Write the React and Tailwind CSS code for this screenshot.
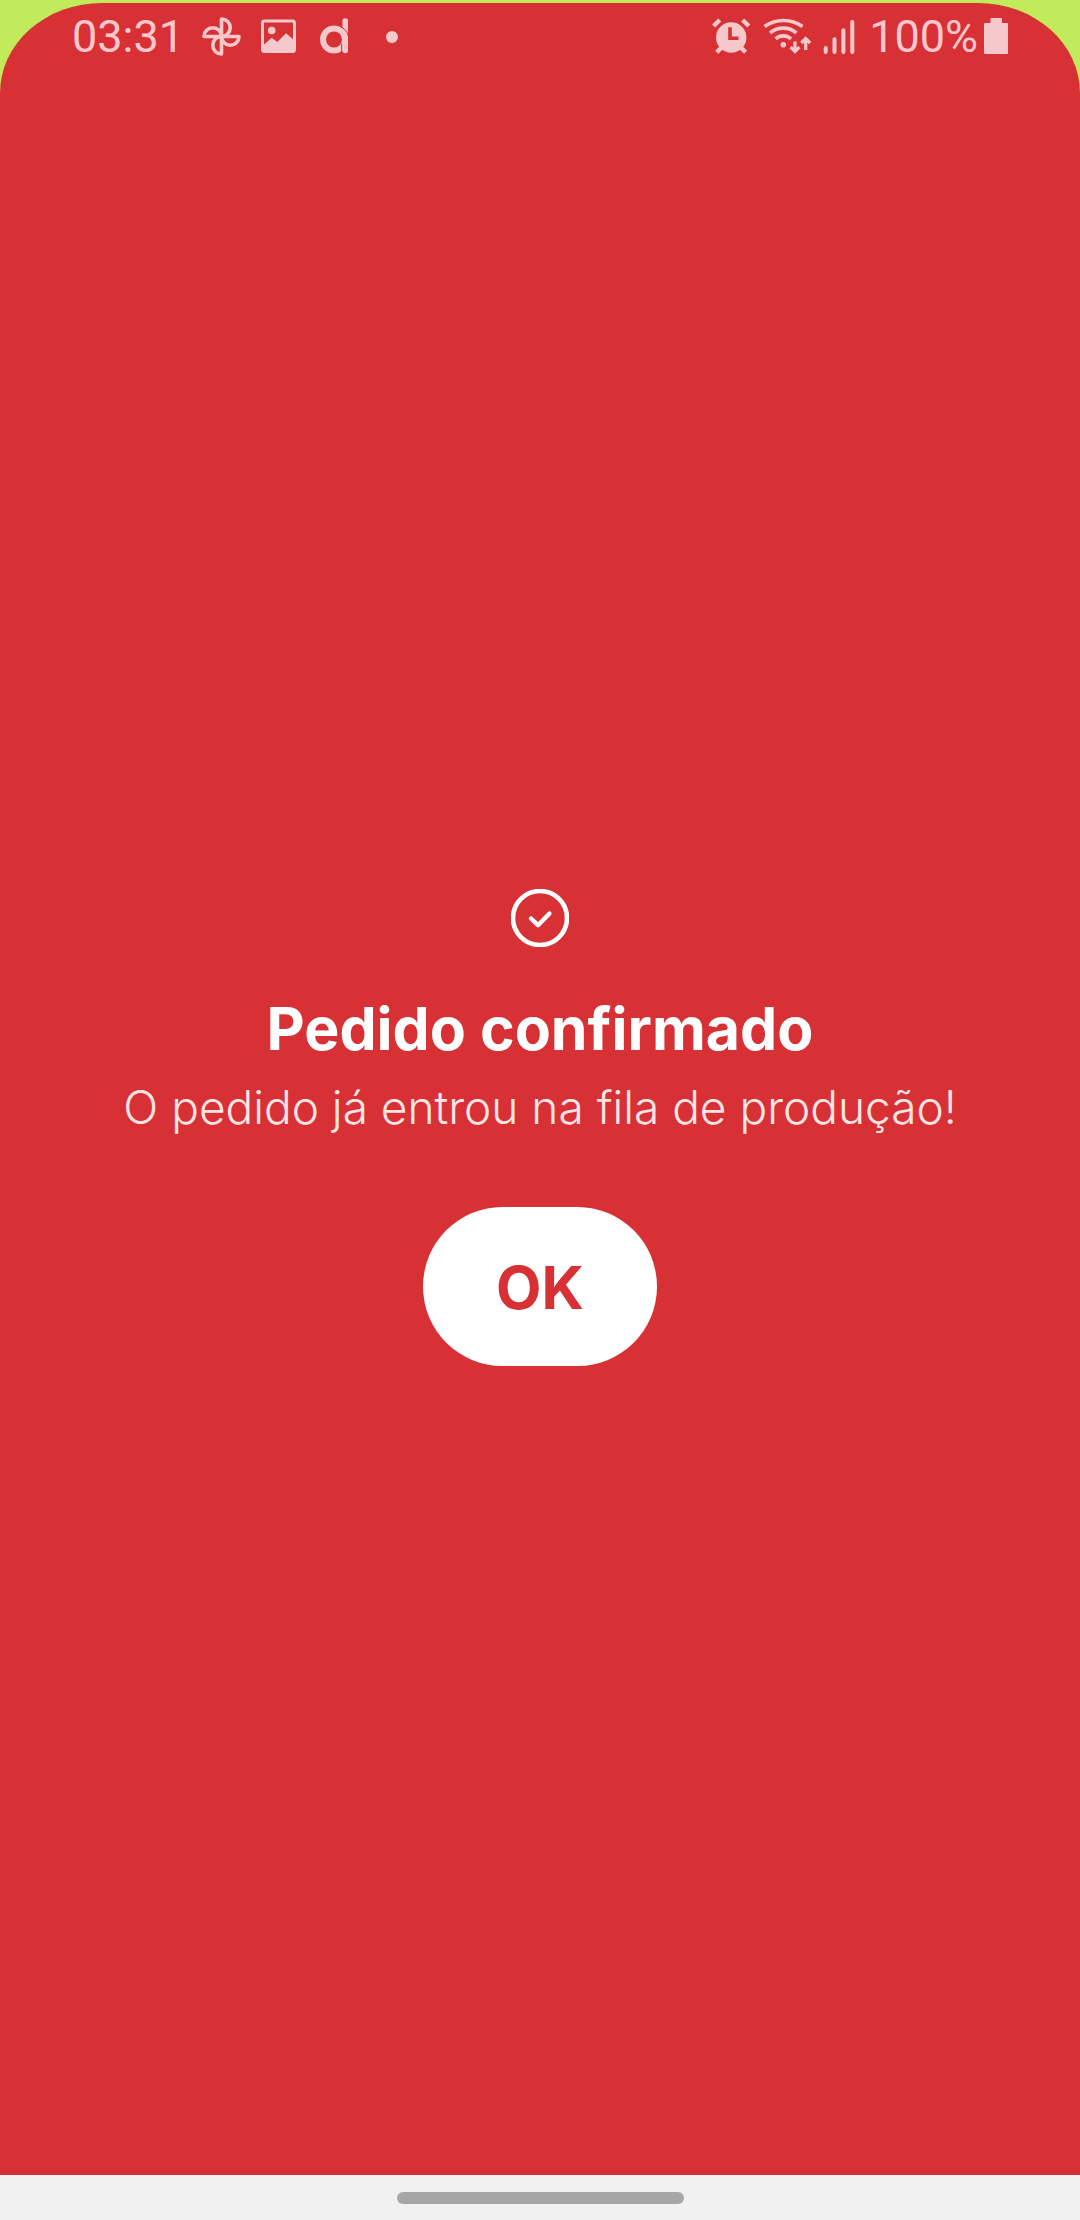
function Icon({ width, children }) {
  return (
    <svg
      width={width}
      height="40"
      viewBox={`0 0 ${width} 40`}
      fill="none"
      aria-hidden="true"
      className="block shrink-0"
    >
      {children}
    </svg>
  );
}

function PinwheelIcon() {
  return (
    <Icon width={41}>
      <g stroke="currentColor" strokeWidth="3.6" strokeLinejoin="round">
        <path d="M20.5 19.5V2a8.75 8.75 0 0 1 0 17.5Z" />
        <path d="M20.5 19.5H38a8.75 8.75 0 0 1-17.5 0Z" />
        <path d="M20.5 19.5V37a8.75 8.75 0 0 1 0-17.5Z" />
        <path d="M20.5 19.5H3a8.75 8.75 0 0 1 17.5 0Z" />
      </g>
    </Icon>
  );
}

function PictureIcon() {
  return (
    <Icon width={35}>
      <rect x="1.5" y="4" width="32" height="30.5" rx="2" stroke="currentColor" strokeWidth="3" />
      <circle cx="10.7" cy="13.5" r="3.8" fill="currentColor" />
      <path d="M2 28.5 10.7 20.7 16.3 25 25 16.3 33 23V35H2Z" fill="currentColor" />
    </Icon>
  );
}

function LetterMarkIcon() {
  return (
    <Icon width={29}>
      <circle cx="14" cy="22.5" r="11" stroke="currentColor" strokeWidth="6" />
      <path d="M25.2 4V33.5" stroke="currentColor" strokeWidth="5.6" strokeLinecap="round" />
      <path d="M20 9.4a14.6 14.6 0 0 1 8.4 9.6M21.6 26.5V36" stroke="#d73136" strokeWidth="1" />
    </Icon>
  );
}

function AlarmIcon() {
  return (
    <Icon width={39}>
      <circle cx="19.2" cy="20.5" r="15.2" fill="currentColor" />
      <path d="M1.6 9 7.8 3M30.6 3l6.2 6M4.8 35.2l6-6M33.6 35.2l-6-6" stroke="currentColor" strokeWidth="4.4" />
      <path d="M18 10.3V21.3H26.5" stroke="#d73136" strokeWidth="3.6" />
    </Icon>
  );
}

function WifiIcon() {
  return (
    <Icon width={50}>
      <g stroke="currentColor" strokeWidth="3.6">
        <path d="M1.5 9.5a33 33 0 0 1 38 0M7 15.8a21 21 0 0 1 26.5 0M12.6 21.8a11.5 11.5 0 0 1 15.4 0" />
        <path d="M32 24.5V34M27.6 30.2l4.4 4.4 4.4-4.4M42.7 33V22M38.3 26l4.4-4.4 4.4 4.4" strokeWidth="3.2" />
      </g>
      <circle cx="20.3" cy="27.7" r="2.8" fill="currentColor" />
    </Icon>
  );
}

function SignalIcon() {
  return (
    <Icon width={32}>
      <path
        d="M2.7 31V35M11.5 22.3V35M20.4 13.3V35M29.3 5V35"
        stroke="currentColor"
        strokeWidth="4"
        strokeLinecap="round"
      />
    </Icon>
  );
}

function BatteryIcon() {
  return (
    <Icon width={24}>
      <path
        d="M7.5 1H17a1 1 0 0 1 1 1V6H23a1 1 0 0 1 1 1V36a1 1 0 0 1-1 1H1a1 1 0 0 1-1-1V7a1 1 0 0 1 1-1H6.500V2a1 1 0 0 1 1-1Z"
        fill="currentColor"
      />
    </Icon>
  );
}

function StatusBar() {
  return (
    <header className="flex h-[76px] justify-between pb-2 pl-[72px] pr-[72px] text-[#f5c8cb]">
      <div className="flex items-center">
        <span className="w-[129px] font-[Roboto,sans-serif] text-[45px] leading-[48px] text-[#ffc8cc]">
          03:31
        </span>
        <PinwheelIcon />
        <span className="ml-[19px]">
          <PictureIcon />
        </span>
        <span className="ml-6">
          <LetterMarkIcon />
        </span>
        <span className="ml-[37px] size-3 rounded-full bg-current" />
      </div>
      <div className="flex items-center">
        <AlarmIcon />
        <span className="ml-3">
          <WifiIcon />
        </span>
        <span className="ml-2.5">
          <SignalIcon />
        </span>
        <span className="ml-3.5 mr-1.5 font-[Roboto,sans-serif] text-[45px] leading-[48px] text-[#ffc8cc]">
          100%
        </span>
        <BatteryIcon />
      </div>
    </header>
  );
}

function Confirmation() {
  return (
    <main className="flex flex-1 flex-col items-center justify-center text-center font-[Inter,sans-serif]">
      <svg width="58" height="58" viewBox="0 0 58 58" fill="none" stroke="#ffffff" aria-hidden="true">
        <circle cx="29" cy="29" r="27" strokeWidth="4.6" />
        <path d="M20 29.500 27 36.200 38.500 24.500" strokeWidth="4.400" strokeLinecap="round" strokeLinejoin="round" />
      </svg>
      <h1 className="mt-[46px] text-[59px] font-bold leading-[72px] text-white">Pedido confirmado</h1>
      <p className="mt-3 text-[46px] font-light leading-[60px] text-[#ffe5e5]">
        O pedido já entrou na fila de produção!
      </p>
      <button
        type="button"
        className="mt-[70px] rounded-full bg-white px-[73px] pb-[42px] pt-[45px] text-[59px] font-bold leading-[72px] text-[#d73136]"
      >
        OK
      </button>
    </main>
  );
}

export default function App() {
  return (
    <div className="flex min-h-screen flex-col bg-[#c1eb5b] pt-[3px]">
      <div className="flex flex-1 flex-col rounded-t-[102px_90px] bg-[#d73136]">
        <StatusBar />
        <Confirmation />
      </div>
      <footer className="flex h-[45px] items-center justify-center bg-[#f1f1f1]">
        <div className="h-3 w-[287px] rounded-full bg-[#a6a6a6]" />
      </footer>
    </div>
  );
}
